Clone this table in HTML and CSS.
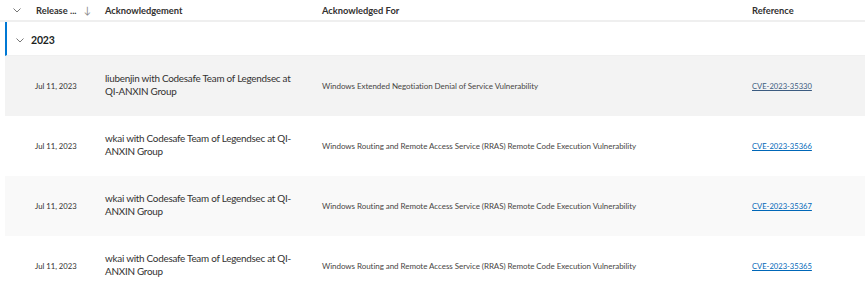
FILE: index.html
```html
<!DOCTYPE html>
<html lang="en">
<head>
  <meta charset="UTF-8">
  <title>Acknowledgements</title>
  <link rel="stylesheet" href="styles.css">
</head>
<body>
  <div class="grid-table">
    <div class="header-row">
      <div class="cell cell-toggle">
        <svg class="chevron" width="8" height="5" viewBox="0 0 8 5"><path d="M0.5 0.5 L4 4 L7.5 0.5" fill="none" stroke="#777" stroke-width="1"/></svg>
      </div>
      <div class="cell head-date">Release ... <span class="sort-arrow">&#8595;</span></div>
      <div class="cell">Acknowledgement</div>
      <div class="cell">Acknowledged For</div>
      <div class="cell">Reference</div>
    </div>

    <div class="body">
      <div class="group-row">
        <svg class="chevron" width="8" height="5" viewBox="0 0 8 5"><path d="M0.5 0.5 L4 4 L7.5 0.5" fill="none" stroke="#777" stroke-width="1"/></svg>
        <span class="group-title">2023</span>
      </div>

      <div class="row row-hover">
        <div class="cell"></div>
        <div class="cell cell-date">Jul 11, 2023</div>
        <div class="cell cell-ack">liubenjin with Codesafe Team of Legendsec at QI-ANXIN Group</div>
        <div class="cell cell-for">Windows Extended Negotiation Denial of Service Vulnerability</div>
        <div class="cell cell-ref"><a href="#" class="ref-link">CVE-2023-35330</a></div>
      </div>

      <div class="row">
        <div class="cell"></div>
        <div class="cell cell-date">Jul 11, 2023</div>
        <div class="cell cell-ack">wkai with Codesafe Team of Legendsec at QI-ANXIN Group</div>
        <div class="cell cell-for">Windows Routing and Remote Access Service (RRAS) Remote Code Execution Vulnerability</div>
        <div class="cell cell-ref"><a href="#" class="ref-link">CVE-2023-35366</a></div>
      </div>

      <div class="row row-alt">
        <div class="cell"></div>
        <div class="cell cell-date">Jul 11, 2023</div>
        <div class="cell cell-ack">wkai with Codesafe Team of Legendsec at QI-ANXIN Group</div>
        <div class="cell cell-for">Windows Routing and Remote Access Service (RRAS) Remote Code Execution Vulnerability</div>
        <div class="cell cell-ref"><a href="#" class="ref-link">CVE-2023-35367</a></div>
      </div>

      <div class="row">
        <div class="cell"></div>
        <div class="cell cell-date">Jul 11, 2023</div>
        <div class="cell cell-ack">wkai with Codesafe Team of Legendsec at QI-ANXIN Group</div>
        <div class="cell cell-for">Windows Routing and Remote Access Service (RRAS) Remote Code Execution Vulnerability</div>
        <div class="cell cell-ref"><a href="#" class="ref-link">CVE-2023-35365</a></div>
      </div>
    </div>
  </div>
</body>
</html>
```

FILE: styles.css
```css
body {
  margin: 0;
  background-color: #ffffff;
  font-family: 'Segoe UI', Lato, sans-serif;
  color: #323130;
  overflow: hidden;
}
.header-row {
  display: grid;
  grid-template-columns: 30px 75px 217px 430px 1fr;
  align-items: center;
  height: 20px;
  border-bottom: 2px solid #efefef;
  font-size: 9.3px;
  font-weight: 700;
  color: #323130;
}
.head-date {
  padding-left: 6px;
}
.cell-toggle {
  display: flex;
  justify-content: center;
  padding-left: 4px;
}
.sort-arrow {
  font-weight: 400;
  font-size: 10px;
  color: #888;
  margin-left: 5px;
}
.body {
  padding-left: 5px;
}
.group-row {
  display: flex;
  align-items: center;
  height: 30px;
  padding-top: 3px;
  border-left: 2px solid #0078d4;
  border-bottom: 1px solid #f0f0f0;
}
.group-row .chevron {
  margin-left: 9px;
}
.group-title {
  margin-left: 7px;
  font-size: 10.5px;
  font-weight: 700;
  letter-spacing: -0.2px;
  color: #201f1e;
}
.row {
  display: grid;
  grid-template-columns: 25px 75px 217px 430px 1fr;
  align-items: center;
  height: 60px;
  background-color: #ffffff;
}
.row-hover {
  background-color: #f3f3f3;
}
.row-alt {
  background-color: #f9f9f9;
}
.cell-date {
  font-size: 7.7px;
  color: #323130;
  padding-left: 5px;
}
.cell-ack {
  font-size: 9.9px;
  letter-spacing: -0.25px;
  line-height: 13px;
  color: #323130;
  padding-right: 24px;
  margin-top: -3px;
}
.cell-for {
  font-size: 8px;
  letter-spacing: -0.05px;
  color: #484644;
}
.cell-ref {
  font-size: 7.6px;
}
.ref-link {
  color: #0067b8;
  text-decoration: underline;
}
.row-hover .ref-link {
  color: #3b5b80;
}
```
